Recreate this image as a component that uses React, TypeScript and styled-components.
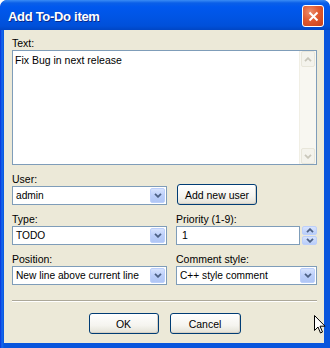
import styled, { createGlobalStyle } from "styled-components";

const GlobalStyle = createGlobalStyle`
  html, body {
    margin: 0;
    padding: 0;
    background: #ffffff;
  }
  body {
    font-family: "Liberation Sans", Arial, sans-serif;
    font-size: 10.5px;
    color: #000000;
  }
`;

const ChevronDown = ({ color }: { color: string }) => (
  <svg width="8" height="5" viewBox="0 0 8 5">
    <path d="M1 0.8 L4 3.8 L7 0.8" fill="none" stroke={color} strokeWidth="1.8" />
  </svg>
);

const ChevronUp = ({ color }: { color: string }) => (
  <svg width="8" height="5" viewBox="0 0 8 5">
    <path d="M1 4.2 L4 1.2 L7 4.2" fill="none" stroke={color} strokeWidth="1.8" />
  </svg>
);

type ComboProps = {
  value: string;
};

const Combo = ({ value }: ComboProps): JSX.Element => (
  <ComboBox>
    <ComboValue>{value}</ComboValue>
    <DropButton>
      <ChevronDown color="#4d6185" />
    </DropButton>
  </ComboBox>
);

const App = (): JSX.Element => {
  return (
    <>
      <GlobalStyle />
      <Window>
        <TitleBar>
          <Title>Add To-Do item</Title>
          <CloseButton>
            <svg width="11" height="11" viewBox="0 0 11 11">
              <path d="M1.5 1.5 L9.5 9.5 M9.5 1.5 L1.5 9.5" stroke="#ffffff" strokeWidth="2" />
            </svg>
          </CloseButton>
        </TitleBar>
        <Client>
          <Field>
            <Label>Text:</Label>
            <TextArea>
              <TextContent>Fix Bug in next release</TextContent>
              <ScrollBar>
                <ScrollArrow>
                  <ChevronUp color="#c9c7ba" />
                </ScrollArrow>
                <ScrollArrow>
                  <ChevronDown color="#c9c7ba" />
                </ScrollArrow>
              </ScrollBar>
            </TextArea>
          </Field>

          <FormGrid>
            <Field>
              <Label>User:</Label>
              <Combo value="admin" />
            </Field>
            <ButtonCell>
              <PushButton $width={80}>Add new user</PushButton>
            </ButtonCell>

            <Field>
              <Label>Type:</Label>
              <Combo value="TODO" />
            </Field>
            <Field>
              <Label>Priority (1-9):</Label>
              <SpinRow>
                <SpinInput>1</SpinInput>
                <SpinButtons>
                  <SpinButton>
                    <ChevronUp color="#4d6185" />
                  </SpinButton>
                  <SpinButton>
                    <ChevronDown color="#4d6185" />
                  </SpinButton>
                </SpinButtons>
              </SpinRow>
            </Field>

            <Field>
              <Label>Position:</Label>
              <Combo value="New line above current line" />
            </Field>
            <Field>
              <Label>Comment style:</Label>
              <Combo value="C++ style comment" />
            </Field>
          </FormGrid>

          <Separator />

          <ButtonRow>
            <PushButton $width={70}>OK</PushButton>
            <PushButton $width={71}>Cancel</PushButton>
          </ButtonRow>
        </Client>
        <Cursor width="12" height="19" viewBox="0 0 12 19">
          <path
            d="M0.5 0.5 L0.5 15.5 L4 12 L6.5 18 L8.5 17 L6 11.2 L11 11.2 Z"
            fill="#ffffff"
            stroke="#000000"
            strokeWidth="1"
            strokeLinejoin="round"
          />
        </Cursor>
      </Window>
    </>
  );
};

export default App;

const Window = styled.div`
  position: relative;
  width: 330px;
  height: 348px;
  box-sizing: border-box;
  display: flex;
  flex-direction: column;
  background: linear-gradient(90deg, #0831d9 0px, #166aee 2px, #0855dd 4px, #0855dd 100%);
  border-radius: 7px 7px 0 0;
  padding: 0 6px 5px 4px;
  overflow: hidden;
`;

const TitleBar = styled.div`
  height: 30px;
  margin: 0 -6px 0 -4px;
  padding: 0 6px 0 8px;
  display: flex;
  align-items: center;
  justify-content: space-between;
  border-radius: 7px 7px 0 0;
  background: linear-gradient(
    180deg,
    #3a8cf5 0px,
    #0a5fe8 3px,
    #0058ee 7px,
    #0054e3 18px,
    #0050d9 26px,
    #0046c4 30px
  );
`;

const Title = styled.div`
  color: #ffffff;
  font-size: 13px;
  font-weight: bold;
  letter-spacing: -0.3px;
  text-shadow: 1px 1px 0 #0a2a8c;
  padding-top: 2px;
`;

const CloseButton = styled.div`
  width: 20px;
  height: 20px;
  margin-top: 2px;
  display: flex;
  align-items: center;
  justify-content: center;
  border: 1px solid #ffffff;
  border-radius: 3px;
  background: radial-gradient(circle at 35% 30%, #ec8e6e 0%, #e15a30 45%, #c6401b 100%);
`;

const Client = styled.div`
  flex: 1;
  background: #ece9d8;
  padding: 7px 7px 0 8px;
  display: flex;
  flex-direction: column;
`;

const Field = styled.div`
  display: flex;
  flex-direction: column;
`;

const Label = styled.div`
  height: 13px;
  line-height: 13px;
`;

const TextArea = styled.div`
  height: 115px;
  box-sizing: border-box;
  border: 1px solid #7f9db9;
  background: #ffffff;
  display: flex;
`;

const TextContent = styled.div`
  flex: 1;
  padding: 3px 2px;
  line-height: 13px;
`;

const ScrollBar = styled.div`
  width: 16px;
  display: flex;
  flex-direction: column;
  justify-content: space-between;
  background: #f8f7f1;
  border-left: 1px solid #f1efe5;
`;

const ScrollArrow = styled.div`
  height: 16px;
  box-sizing: border-box;
  margin: 0 1px;
  display: flex;
  align-items: center;
  justify-content: center;
  border: 1px solid #e8e6da;
  border-radius: 2px;
  background: #f4f3ec;
`;

const FormGrid = styled.div`
  margin-top: 8px;
  display: grid;
  grid-template-columns: 155px 1fr;
  column-gap: 9px;
  row-gap: 8px;
`;

const ButtonCell = styled.div`
  display: flex;
  align-items: flex-end;
  padding-left: 1px;
`;

const ComboBox = styled.div`
  height: 19px;
  box-sizing: border-box;
  border: 1px solid #7f9db9;
  background: #ffffff;
  display: flex;
  align-items: stretch;
`;

const ComboValue = styled.div`
  flex: 1;
  padding-left: 3px;
  font-size: 10.2px;
  line-height: 17px;
  white-space: nowrap;
  overflow: hidden;
`;

const DropButton = styled.div`
  width: 15px;
  margin: 1px;
  display: flex;
  align-items: center;
  justify-content: center;
  border-radius: 2px;
  background: linear-gradient(180deg, #d7e3fd 0%, #bccffa 50%, #b0c6f5 100%);
  border: 1px solid #bccffb;
  box-sizing: border-box;
`;

const SpinRow = styled.div`
  display: flex;
  gap: 2px;
`;

const SpinInput = styled.div`
  flex: 1;
  height: 19px;
  box-sizing: border-box;
  border: 1px solid #7f9db9;
  background: #ffffff;
  padding-left: 5px;
  line-height: 17px;
`;

const SpinButtons = styled.div`
  width: 15px;
  display: flex;
  flex-direction: column;
  gap: 1px;
`;

const SpinButton = styled.div`
  flex: 1;
  display: flex;
  align-items: center;
  justify-content: center;
  border-radius: 2px;
  border: 1px solid #bccffb;
  background: linear-gradient(180deg, #d7e3fd 0%, #b9cdf9 100%);
`;

const PushButton = styled.div<{ $width: number }>`
  width: ${(p) => p.$width}px;
  height: 21px;
  box-sizing: border-box;
  display: flex;
  align-items: center;
  justify-content: center;
  border: 1px solid #003c74;
  border-radius: 3px;
  background: linear-gradient(180deg, #ffffff 0%, #f5f4ef 60%, #e3e1d6 100%);
  box-shadow: inset -1px -1px 0 #d6d0c5;
`;

const Separator = styled.div`
  margin-top: 15px;
  height: 1px;
  background: #aca899;
  border-bottom: 1px solid #ffffff;
`;

const ButtonRow = styled.div`
  margin-top: 11px;
  display: flex;
  justify-content: center;
  gap: 11px;
`;

const Cursor = styled.svg`
  position: absolute;
  left: 314px;
  top: 315px;
`;
